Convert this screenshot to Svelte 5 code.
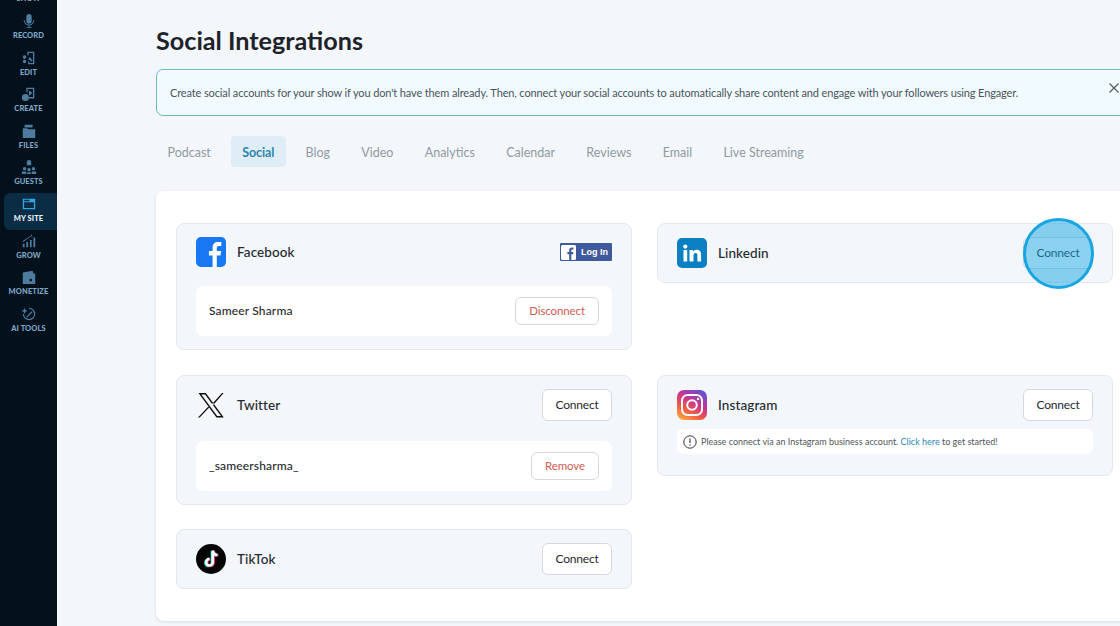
<script>
  const tabs = ['Podcast', 'Social', 'Blog', 'Video', 'Analytics', 'Calendar', 'Reviews', 'Email', 'Live Streaming'];
  const nav = [
    { label: 'SHOW', d: 'M4 5h10v8H4z' },
    { label: 'RECORD', d: 'M9 1a3 3 0 0 1 3 3v5a3 3 0 0 1-6 0V4a3 3 0 0 1 3-3zM4 8a5 5 0 0 0 10 0h1a6 6 0 0 1-5.500 6v2H12v1H6v-1h2.500v-2A6 6 0 0 1 3 8z' },
    { label: 'EDIT', d: 'M7 2h8v14H8v-3h1.500v1.500h4V3.500h-5V6H7zM4 6a2 2 0 1 1 0 4 2 2 0 0 1 0-4zm0 5a2 2 0 1 1 0 4 2 2 0 0 1 0-4zm6-3l3 4-1 1-4-3z' },
    { label: 'CREATE', d: 'M6 2h9v12H9v-1.500h4.500v-9h-6V7H6zM9 5l4 3-4 3zM5 9a4 4 0 1 1 0 8 4 4 0 0 1 0-8z' },
    { label: 'FILES', d: 'M4 2h9v3H4zM2 6h5l1 1h8v10H2z' },
    { label: 'GUESTS', d: 'M9 1a2.500 2.500 0 0 1 2.500 2.500V7h-5V3.500A2.500 2.500 0 0 1 9 1zM4 9a2 2 0 1 1 0 4 2 2 0 0 1 0-4zm10 0a2 2 0 1 1 0 4 2 2 0 0 1 0-4zM9 10a2 2 0 1 1 0 4 2 2 0 0 1 0-4zM1 14h5v3H1zm6 1h4v2H7zm5-1h5v3h-5z' },
    { label: 'MY SITE', d: 'M2 3h14v12H2zm1.500 4v6.500h11V7zM3.500 4.200v1.600h6V4.200z', active: true },
    { label: 'GROW', d: 'M2 12h2v4H2zm4-2h2v6H6zm4-2h2v8h-2zm4-3h2v11h-2zM2 9l9-6 1-1.500L13 5l-1.500-1.500L2.500 10z' },
    { label: 'MONETIZE', d: 'M2 4l11-2 1 3h2v12H2zm9 7a1.500 1.500 0 1 0 0 3 1.500 1.500 0 0 0 0-3z' },
    { label: 'AI TOOLS', d: 'M9 2a7 7 0 1 1-7 7h1.300A5.700 5.700 0 1 0 9 3.300zM4 2l1 2.500L7.500 5.500 5 6.500 4 9 3 6.500.5 5.500 3 4.500zM6 12l6-6 1 1-6 6z' }
  ];
</script>

<div class="app">
  <aside class="sidebar">
    {#each nav as item}
      <div class="nav-item" class:active={item.active}>
        <svg width="16" height="16" viewBox="0 0 18 18"><path d={item.d} fill-rule="evenodd" /></svg>
        <span>{item.label}</span>
      </div>
    {/each}
  </aside>

  <main class="main">
    <h1>Social Integrations</h1>

    <div class="alert">
      <p>Create social accounts for your show if you don't have them already. Then, connect your social accounts to automatically share content and engage with your followers using Engager.</p>
      <svg class="close" width="10" height="10" viewBox="0 0 10 10"><path d="M.5.5l9 9M9.500.5l-9 9" stroke="#4a5560" stroke-width="1.100" /></svg>
    </div>

    <div class="tabs">
      {#each tabs as tab}
        <span class="tab" class:selected={tab === 'Social'}>{tab}</span>
      {/each}
    </div>

    <section class="panel">
      <div class="grid">
        <div class="card fb">
          <div class="head">
            <svg class="logo" viewBox="0 0 30 30"><rect width="30" height="30" rx="5" fill="#1877f2" /><path d="M20.800 30V18.500h3.700l.6-4.500h-4.300v-2.800c0-1.300.5-2.200 2.300-2.200h2.200V5.100c-.5-.1-1.800-.2-3.200-.2-3.300 0-5.500 2-5.500 5.700V14h-3.700v4.500h3.700V30z" fill="#fff" /></svg>
            <span class="name">Facebook</span>
            <span class="fb-login">
              <svg width="15" height="15" viewBox="0 0 15 15"><rect width="15" height="15" rx="1.500" fill="#fff" /><path d="M10.300 15V9.300h1.800l.3-2.200h-2.100V5.700c0-.6.200-1.100 1.100-1.100h1.100V2.700c-.3 0-.9-.1-1.600-.1-1.600 0-2.700 1-2.700 2.800v1.700H6.400v2.200h1.800V15z" fill="#3f5a9c" /></svg>
              Log In
            </span>
          </div>
          <div class="row">
            <span class="user">Sameer Sharma</span>
            <button class="btn danger">Disconnect</button>
          </div>
        </div>

        <div class="card linkedin">
          <div class="head">
            <svg class="logo" viewBox="0 0 30 30"><rect width="30" height="30" rx="5" fill="#0a7fc2" /><path d="M6.500 12h3.700v11.500H6.500zM8.350 6.500a2.100 2.100 0 1 1 0 4.200 2.100 2.100 0 0 1 0-4.200zM12.500 12H16v1.600c.6-1 1.900-1.900 3.700-1.900 3.700 0 4.400 2.400 4.400 5.600v6.200h-3.700V18c0-1.300 0-3-1.800-3s-2.100 1.400-2.100 2.900v5.600h-4z" fill="#fff" /></svg>
            <span class="name">Linkedin</span>
            <div class="spot">
              <button class="btn">Connect</button>
              <span class="ring"></span>
            </div>
          </div>
        </div>

        <div class="card tw">
          <div class="head">
            <svg class="logo" viewBox="0 0 30 30"><path d="M2.500 3h7.300l18 24.500h-7.300zM5.300 4.400l15.900 21.700h3.800L9.100 4.400zM26 3l-9.900 11 .9 1.200L27.700 3zM12.600 16.300L2 27.500h1.700l9.700-10.200z" fill="#0d0d0d" fill-rule="evenodd" /></svg>
            <span class="name">Twitter</span>
            <button class="btn">Connect</button>
          </div>
          <div class="row">
            <span class="user">_sameersharma_</span>
            <button class="btn danger">Remove</button>
          </div>
        </div>

        <div class="card ig">
          <div class="head">
            <svg class="logo" viewBox="0 0 30 30">
              <defs>
                <linearGradient id="ig-grad" x1="0.100" y1="1" x2="0.700" y2="0">
                  <stop offset="0" stop-color="#fdb040" />
                  <stop offset="0.350" stop-color="#ef5a46" />
                  <stop offset="0.650" stop-color="#c9358f" />
                  <stop offset="1" stop-color="#6a4fd0" />
                </linearGradient>
              </defs>
              <rect width="30" height="30" rx="7" fill="url(#ig-grad)" />
              <rect x="5" y="5" width="20" height="20" rx="5.500" fill="none" stroke="#fff" stroke-width="2" />
              <circle cx="15" cy="15" r="4.800" fill="none" stroke="#fff" stroke-width="2" />
              <circle cx="21" cy="9" r="1.200" fill="#fff" />
            </svg>
            <span class="name">Instagram</span>
            <button class="btn">Connect</button>
          </div>
          <div class="note">
            <svg width="14" height="14" viewBox="0 0 14 14"><circle cx="7" cy="7" r="6.200" fill="none" stroke="#333" stroke-width="1" /><path d="M7 3.500v4.500M7 9.500v1.200" stroke="#333" stroke-width="1.100" /></svg>
            <span>Please connect via an Instagram business account. <a href="#top">Click here</a> to get started!</span>
          </div>
        </div>

        <div class="card tt">
          <div class="head">
            <svg class="logo" viewBox="0 0 30 30">
              <circle cx="15" cy="15" r="15" fill="#050505" />
              <path d="M16.800 6.500v11.700a3.300 3.300 0 1 1-3.300-3.300M16.800 6.500c.3 2.600 2 4.300 4.700 4.500" fill="none" stroke="#25f4ee" stroke-width="2.600" transform="translate(-.8 .5)" />
              <path d="M16.800 6.500v11.700a3.300 3.300 0 1 1-3.300-3.300M16.800 6.500c.3 2.600 2 4.300 4.700 4.500" fill="none" stroke="#fe2c55" stroke-width="2.600" transform="translate(.8 .3)" />
              <path d="M16.800 6.500v11.700a3.300 3.300 0 1 1-3.300-3.300M16.800 6.500c.3 2.600 2 4.300 4.700 4.500" fill="none" stroke="#fff" stroke-width="2.600" />
            </svg>
            <span class="name">TikTok</span>
            <button class="btn">Connect</button>
          </div>
        </div>
      </div>
    </section>
  </main>
</div>

<style>
  :global(body) {
    margin: 0;
    background: #f3f6fa;
    overflow: hidden;
  }

  .app {
    display: flex;
    height: 626px;
    overflow: hidden;
    font-family: Lato, 'Noto Sans', sans-serif;
    color: #1c2126;
  }

  .sidebar {
    flex: 0 0 57px;
    background: #03111d;
    margin-top: -26.6px;
    height: 653px;
    box-sizing: border-box;
  }

  .nav-item {
    height: 36.6px;
    margin-left: 4px;
    display: flex;
    flex-direction: column;
    align-items: center;
    padding-right: 4px;
    padding-top: 3px;
    box-sizing: border-box;
    color: #7ea6c4;
    font-size: 7.500px;
    font-weight: 900;
    line-height: 9px;
    letter-spacing: 0.1px;
  }

  .nav-item svg {
    fill: #4d7c9f;
    margin-bottom: 2px;
  }

  .nav-item.active {
    background: #0a2c44;
    border-radius: 6px 0 0 6px;
    color: #e4f1fa;
  }

  .nav-item.active svg {
    fill: #35a4e0;
  }

  .main {
    flex: 1;
    min-width: 0;
    padding-left: 99px;
  }

  h1 {
    margin: 25px 0 0;
    font-size: 25.200px;
    line-height: 30px;
    font-weight: 700;
    color: #1d2329;
  }

  .alert {
    margin-top: 14px;
    width: 1000px;
    height: 47px;
    box-sizing: border-box;
    border: 1px solid #6fb8c9;
    border-radius: 7px;
    background: #f1fbff;
    display: flex;
    align-items: center;
    padding: 0 13px;
    position: relative;
  }

  .alert p {
    margin: 0;
    font-size: 11px;
    color: #4b5359;
    white-space: nowrap;
    letter-spacing: -0.13px;
  }

  .close {
    position: absolute;
    left: 952px;
    top: 13px;
  }

  .tabs {
    display: flex;
    margin-top: 20px;
    height: 31px;
    align-items: center;
  }

  .tab {
    padding: 0 11.500px;
    height: 31px;
    line-height: 33px;
    margin-right: 8.300px;
    font-size: 12.500px;
    color: #929aa1;
    border-radius: 4px;
  }

  .tab.selected {
    background: #dfeef6;
    color: #2d85ae;
    font-weight: 700;
    letter-spacing: -0.1px;
  }

  .panel {
    margin-top: 24px;
    width: 1000px;
    height: 430px;
    box-sizing: border-box;
    background: #fff;
    border-radius: 8px;
    box-shadow: 0 1px 3px rgba(30, 50, 70, 0.12);
    padding: 32px 20px;
  }

  .grid {
    display: grid;
    grid-template-columns: 456px 456px;
    column-gap: 25px;
    row-gap: 25px;
    align-items: start;
  }

  .card {
    background: #f3f6fa;
    border: 1px solid #e3e8ed;
    border-radius: 8px;
    padding: 13px 19px;
  }

  .tt {
    grid-column: 1;
    margin-top: -1px;
  }

  .head {
    display: flex;
    align-items: center;
    height: 32px;
  }

  .fb .head {
    height: 30px;
    margin-bottom: 19px;
  }

  .tw .head {
    margin-bottom: 20px;
  }

  .ig .head {
    margin-bottom: 8px;
  }

  .ig {
    padding-bottom: 21px;
  }

  .logo {
    width: 30px;
    height: 30px;
    flex: none;
  }

  .name {
    margin-left: 11px;
    margin-right: auto;
    margin-bottom: 1px;
    font-size: 13.500px;
    font-weight: 500;
    color: #24292e;
    letter-spacing: 0.1px;
  }

  .fb-login {
    display: flex;
    align-items: center;
    gap: 5px;
    width: 52px;
    height: 18px;
    padding-left: 1px;
    box-sizing: border-box;
    background: #3f5a9c;
    color: #fff;
    font-size: 9px;
    font-weight: 700;
    border-radius: 1px;
    font-family: 'Liberation Sans', sans-serif;
  }

  .row {
    height: 50px;
    display: flex;
    align-items: center;
    justify-content: space-between;
    background: #fff;
    border-radius: 7px;
    padding: 0 13px;
  }

  .user {
    font-size: 12px;
    font-weight: 500;
    color: #26292c;
    letter-spacing: 0.15px;
    margin-bottom: 1px;
  }

  .btn {
    height: 32px;
    width: 70px;
    padding: 0 0 2px;
    background: #fff;
    border: 1px solid #d5d9dd;
    border-radius: 6px;
    font-family: inherit;
    font-size: 12px;
    color: #24292e;
    letter-spacing: -0.2px;
  }

  .danger {
    height: 28px;
    width: auto;
    padding: 0 13px 2px;
    color: #cf5a52;
    font-size: 11.500px;
    letter-spacing: -0.1px;
  }

  .spot {
    position: relative;
  }

  .ring {
    position: absolute;
    left: 50%;
    top: 50%;
    width: 71px;
    height: 71px;
    margin: -35.500px 0 0 -35.500px;
    box-sizing: border-box;
    border: 3px solid #18a5e2;
    border-radius: 50%;
    background: rgba(24, 165, 226, 0.5);
  }

  .note {
    height: 25px;
    display: flex;
    align-items: center;
    gap: 4px;
    padding: 0 6px;
    background: #fff;
    border-radius: 6px;
    font-size: 9px;
    color: #50565b;
    white-space: nowrap;
  }

  .note a {
    color: #2a86b4;
    text-decoration: none;
  }
</style>
